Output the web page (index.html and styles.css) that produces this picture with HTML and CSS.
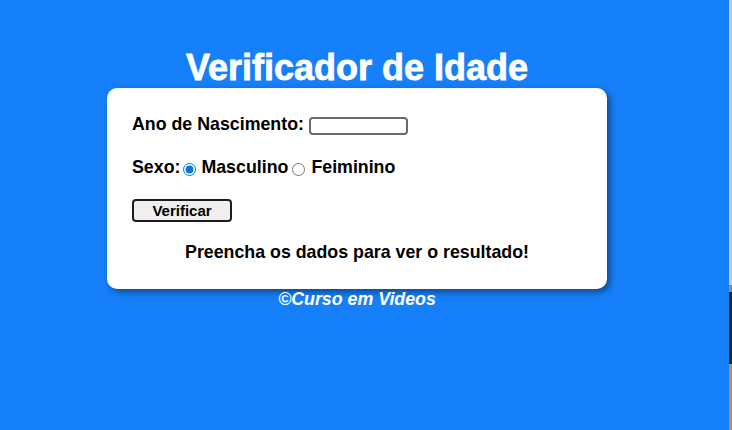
FILE: index.html
```html
<!DOCTYPE html>
<html lang="pt-BR">
<head>
<meta charset="utf-8">
<title>Verificador de Idade</title>
<link rel="stylesheet" href="styles.css">
</head>
<body>
<div class="page">
  <main class="app">
    <header class="top">
      <h1 class="title">Verificador de Idade</h1>
    </header>
    <section class="card">
      <div class="row row-ano">
        <label class="lbl" for="ano">Ano de Nascimento:</label>
        <input class="ano" id="ano" type="text">
      </div>
      <div class="row row-sexo">
        <span class="lbl">Sexo:</span>
        <input class="radio r1" type="radio" name="sexo" id="masc" checked>
        <label class="lbl" for="masc">Masculino</label>
        <input class="radio r2" type="radio" name="sexo" id="fem">
        <label class="lbl" for="fem">Feiminino</label>
      </div>
      <div class="row row-btn">
        <button class="btn" type="button">Verificar</button>
      </div>
      <div class="res">Preencha os dados para ver o resultado!</div>
    </section>
    <footer class="foot">©Curso em Videos</footer>
  </main>
  <div class="edge"></div>
</div>
</body>
</html>
```
FILE: styles.css
```css
html, body {
  margin: 0;
  padding: 0;
  height: 100%;
}
body {
  background: #1680fa;
  font-family: "Liberation Sans", Arial, sans-serif;
  overflow: hidden;
}
.page {
  display: flex;
  height: 430px;
}
.app {
  flex: 1;
  padding-right: 15px;
  display: flex;
  flex-direction: column;
  align-items: center;
}
.top {
  padding-top: 47px;
}
.title {
  margin: 0;
  font-size: 36px;
  line-height: 41px;
  font-weight: bold;
  color: #fff;
  -webkit-text-stroke: 0.8px #fff;
  text-align: center;
}
.card {
  width: 500px;
  box-sizing: border-box;
  background: #fff;
  border-radius: 10px;
  box-shadow: 3px 3px 7px rgba(0, 0, 0, 0.45);
  padding: 26px 25px 26px;
  display: flex;
  flex-direction: column;
}
.row {
  display: flex;
}
.lbl {
  font-size: 17.8px;
  line-height: 21px;
  font-weight: bold;
  color: #000;
}
.row-ano {
  align-items: flex-end;
  height: 21px;
}
.ano {
  width: 99px;
  height: 18px;
  box-sizing: border-box;
  margin: 0 0 0 5px;
  padding: 0 3px;
  border: 2px solid #6b6b6b;
  border-radius: 4px;
  background: #fff;
}
.row-sexo {
  margin-top: 22px;
  align-items: center;
  height: 21px;
}
.radio {
  width: 13px;
  height: 13px;
  margin: 3px 0 0;
  accent-color: #0b76d8;
}
.r1 {
  margin-left: 3px;
  margin-right: 5px;
}
.r2 {
  margin-left: 4px;
  margin-right: 6px;
}
.row-btn {
  margin-top: 21px;
}
.btn {
  width: 100px;
  height: 23px;
  box-sizing: border-box;
  margin: 0;
  padding: 0;
  border: 2px solid #1e1e1e;
  border-radius: 4px;
  background: #efefef;
  font-family: "Liberation Sans", Arial, sans-serif;
  font-size: 15px;
  font-weight: bold;
  color: #000;
  line-height: 19px;
}
.res {
  margin-top: 20px;
  font-size: 17.8px;
  line-height: 21px;
  font-weight: bold;
  text-align: center;
  color: #000;
}
.foot {
  font-size: 17.8px;
  line-height: 21px;
  font-weight: bold;
  font-style: italic;
  color: #fff;
  text-align: center;
}
.edge {
  width: 3px;
  background: linear-gradient(to bottom,
    #c8c8c8 0, #c8c8c8 285px,
    #8a8a8a 285px, #8a8a8a 292px,
    #17262a 292px, #17262a 364px,
    #c4875c 364px, #c4875c 100%);
}
```
